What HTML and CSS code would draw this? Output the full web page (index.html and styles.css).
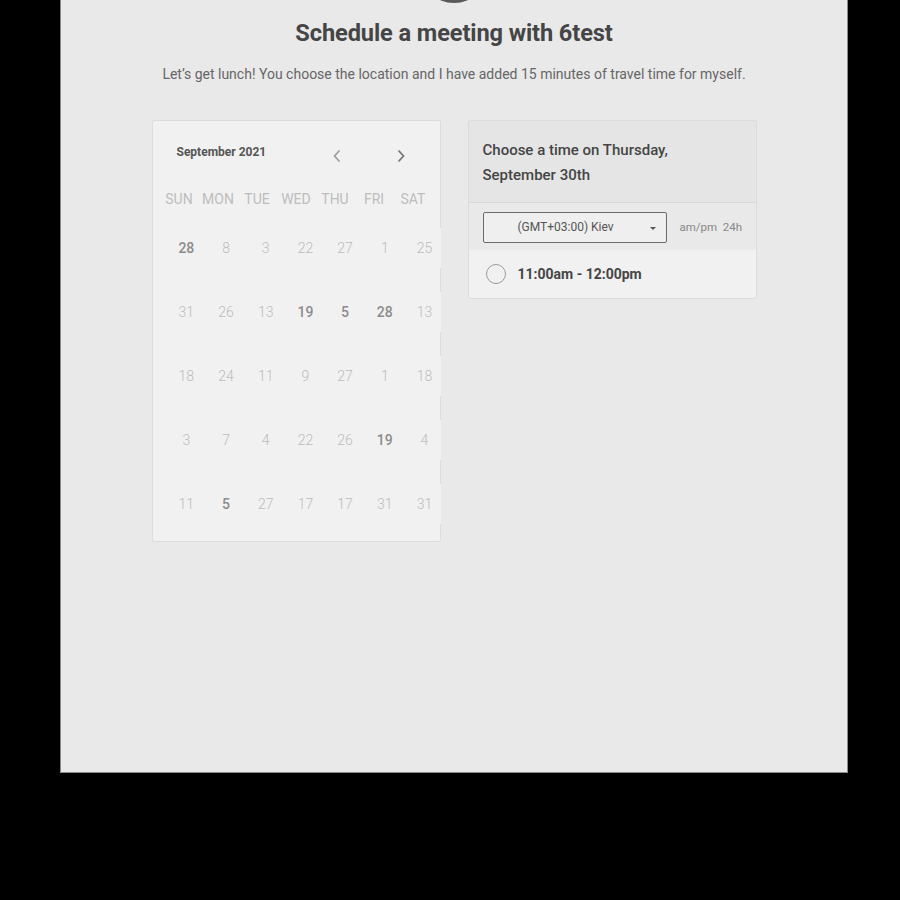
FILE: index.html
```html
<!DOCTYPE html>
<html>
<head>
<meta charset="utf-8">
<link rel="stylesheet" href="styles.css">
</head>
<body>
<div class="panel">
  <div class="avatar"></div>
  <h1 class="title">Schedule a meeting with 6test</h1>
  <p class="subtitle">Let’s get lunch! You choose the location and I have added 15 minutes of travel time for myself.</p>
  <div class="cards">
    <div class="calendar">
      <div class="cal-head">
        <span class="month">September 2021</span>
        <span class="arrow prev"><svg width="10" height="14" viewBox="0 0 10 14"><path d="M7.5 1.5 L2.5 7 L7.5 12.5" fill="none" stroke="#9a9a9a" stroke-width="1.6"/></svg></span>
        <span class="arrow next"><svg width="10" height="14" viewBox="0 0 10 14"><path d="M2.5 1.5 L7.5 7 L2.5 12.5" fill="none" stroke="#777" stroke-width="1.8"/></svg></span>
      </div>
      <div class="week">
        <span>SUN</span><span>MON</span><span>TUE</span><span>WED</span><span>THU</span><span>FRI</span><span>SAT</span>
      </div>
      <div class="days">
        <div class="row"><span class="on">28</span><span>8</span><span>3</span><span>22</span><span>27</span><span>1</span><span>25</span></div>
        <div class="row"><span>31</span><span>26</span><span>13</span><span class="on">19</span><span class="on">5</span><span class="on">28</span><span>13</span></div>
        <div class="row"><span>18</span><span>24</span><span>11</span><span>9</span><span>27</span><span>1</span><span>18</span></div>
        <div class="row"><span>3</span><span>7</span><span>4</span><span>22</span><span>26</span><span class="on">19</span><span>4</span></div>
        <div class="row"><span>11</span><span class="on">5</span><span>27</span><span>17</span><span>17</span><span>31</span><span>31</span></div>
      </div>
    </div>
    <div class="times">
      <div class="times-head">Choose a time on Thursday,<br>September 30th</div>
      <div class="tz-row">
        <div class="select"><span>(GMT+03:00) Kiev</span><span class="caret"></span></div>
        <span class="fmt">am/pm&nbsp; 24h</span>
      </div>
      <div class="slot">
        <span class="radio"></span>
        <span class="slot-text">11:00am - 12:00pm</span>
      </div>
    </div>
  </div>
</div>
</body>
</html>
```
FILE: styles.css
```css
html, body {
  margin: 0;
  padding: 0;
  background: #000;
}
body {
  font-family: Roboto, "Liberation Sans", sans-serif;
  width: 900px;
  height: 900px;
  overflow: hidden;
}
.panel {
  margin-left: 60px;
  width: 786px;
  height: 772px;
  background: #e9e9e9;
  border: 1px solid #8a8a8a;
  border-top: none;
  display: flex;
  flex-direction: column;
  align-items: center;
  overflow: hidden;
}
.avatar {
  width: 68px;
  height: 68px;
  border-radius: 50%;
  background: #5a5a5a;
  margin-top: -65px;
  flex: none;
}
.title {
  margin: 16px 0 0;
  font-size: 23.6px;
  line-height: 28px;
  font-weight: 700;
  color: #454545;
  letter-spacing: -0.1px;
}
.subtitle {
  margin: 18px 0 0;
  font-size: 14px;
  line-height: 18px;
  color: #666;
}
.cards {
  margin-top: 37px;
  display: flex;
  gap: 27px;
  align-items: flex-start;
}
.calendar {
  background: #f1f1f1;
  border: 1px solid #dcdcdc;
  border-radius: 2px;
  padding-top: 17px;
  box-sizing: border-box;
  height: 422px;
  width: 289px;
}
.cal-head {
  display: flex;
  align-items: center;
  height: 30px;
  padding-left: 24px;
}
.month {
  font-size: 12px;
  font-weight: 700;
  color: #555;
  width: 155px;
  margin-top: -2px;
}
.arrow {
  display: flex;
  margin-top: 5px;
}
.next { margin-left: 54px; }
.week {
  display: grid;
  grid-template-columns: repeat(7, 39px);
  padding-left: 7px;
  margin-top: 21px;
  height: 20px;
  align-items: center;
  font-size: 14px;
  color: #bdbdbd;
  text-align: center;
}
.days {
  margin-top: 19px;
  display: flex;
  flex-direction: column;
  gap: 24px;
  margin-right: -1px;
}
.row {
  display: grid;
  grid-template-columns: repeat(7, 39.7px);
  padding-left: 14px;
  height: 40px;
  align-items: center;
  text-align: center;
  font-size: 14px;
  font-weight: 300;
  color: #bcbcbc;
  background: #f1f1f1;
}
.row .on {
  color: #8c8c8c;
  font-weight: 500;
}
.times {
  width: 289px;
  box-sizing: border-box;
  border: 1px solid #dcdcdc;
  border-radius: 2px;
  background: #f1f1f1;
}
.times-head {
  background: #e5e5e5;
  padding: 17px 14px 14px;
  font-size: 15px;
  line-height: 25px;
  font-weight: 500;
  color: #454545;
  border-bottom: 1px solid #d9d9d9;
}
.tz-row {
  background: #e9e9e9;
  height: 47px;
  display: flex;
  align-items: center;
  padding-left: 14px;
}
.select {
  width: 184px;
  height: 31px;
  box-sizing: border-box;
  border: 1px solid #6a6a6a;
  border-radius: 2px;
  background: #efefef;
  display: flex;
  align-items: center;
  padding-left: 34px;
  font-size: 12px;
  color: #555;
  position: relative;
  margin-top: 1px;
}
.caret {
  position: absolute;
  right: 10px;
  top: 14px;
  width: 0;
  height: 0;
  border-left: 3px solid transparent;
  border-right: 3px solid transparent;
  border-top: 3px solid #555;
}
.fmt {
  margin-left: 13px;
  font-size: 11.5px;
  color: #888;
}
.slot {
  height: 48px;
  display: flex;
  align-items: center;
  padding-left: 17px;
}
.radio {
  width: 18px;
  height: 18px;
  border: 1.5px solid #9c9c9c;
  border-radius: 50%;
  flex: none;
}
.slot-text {
  margin-left: 12px;
  font-size: 14px;
  font-weight: 700;
  color: #454545;
}
```
